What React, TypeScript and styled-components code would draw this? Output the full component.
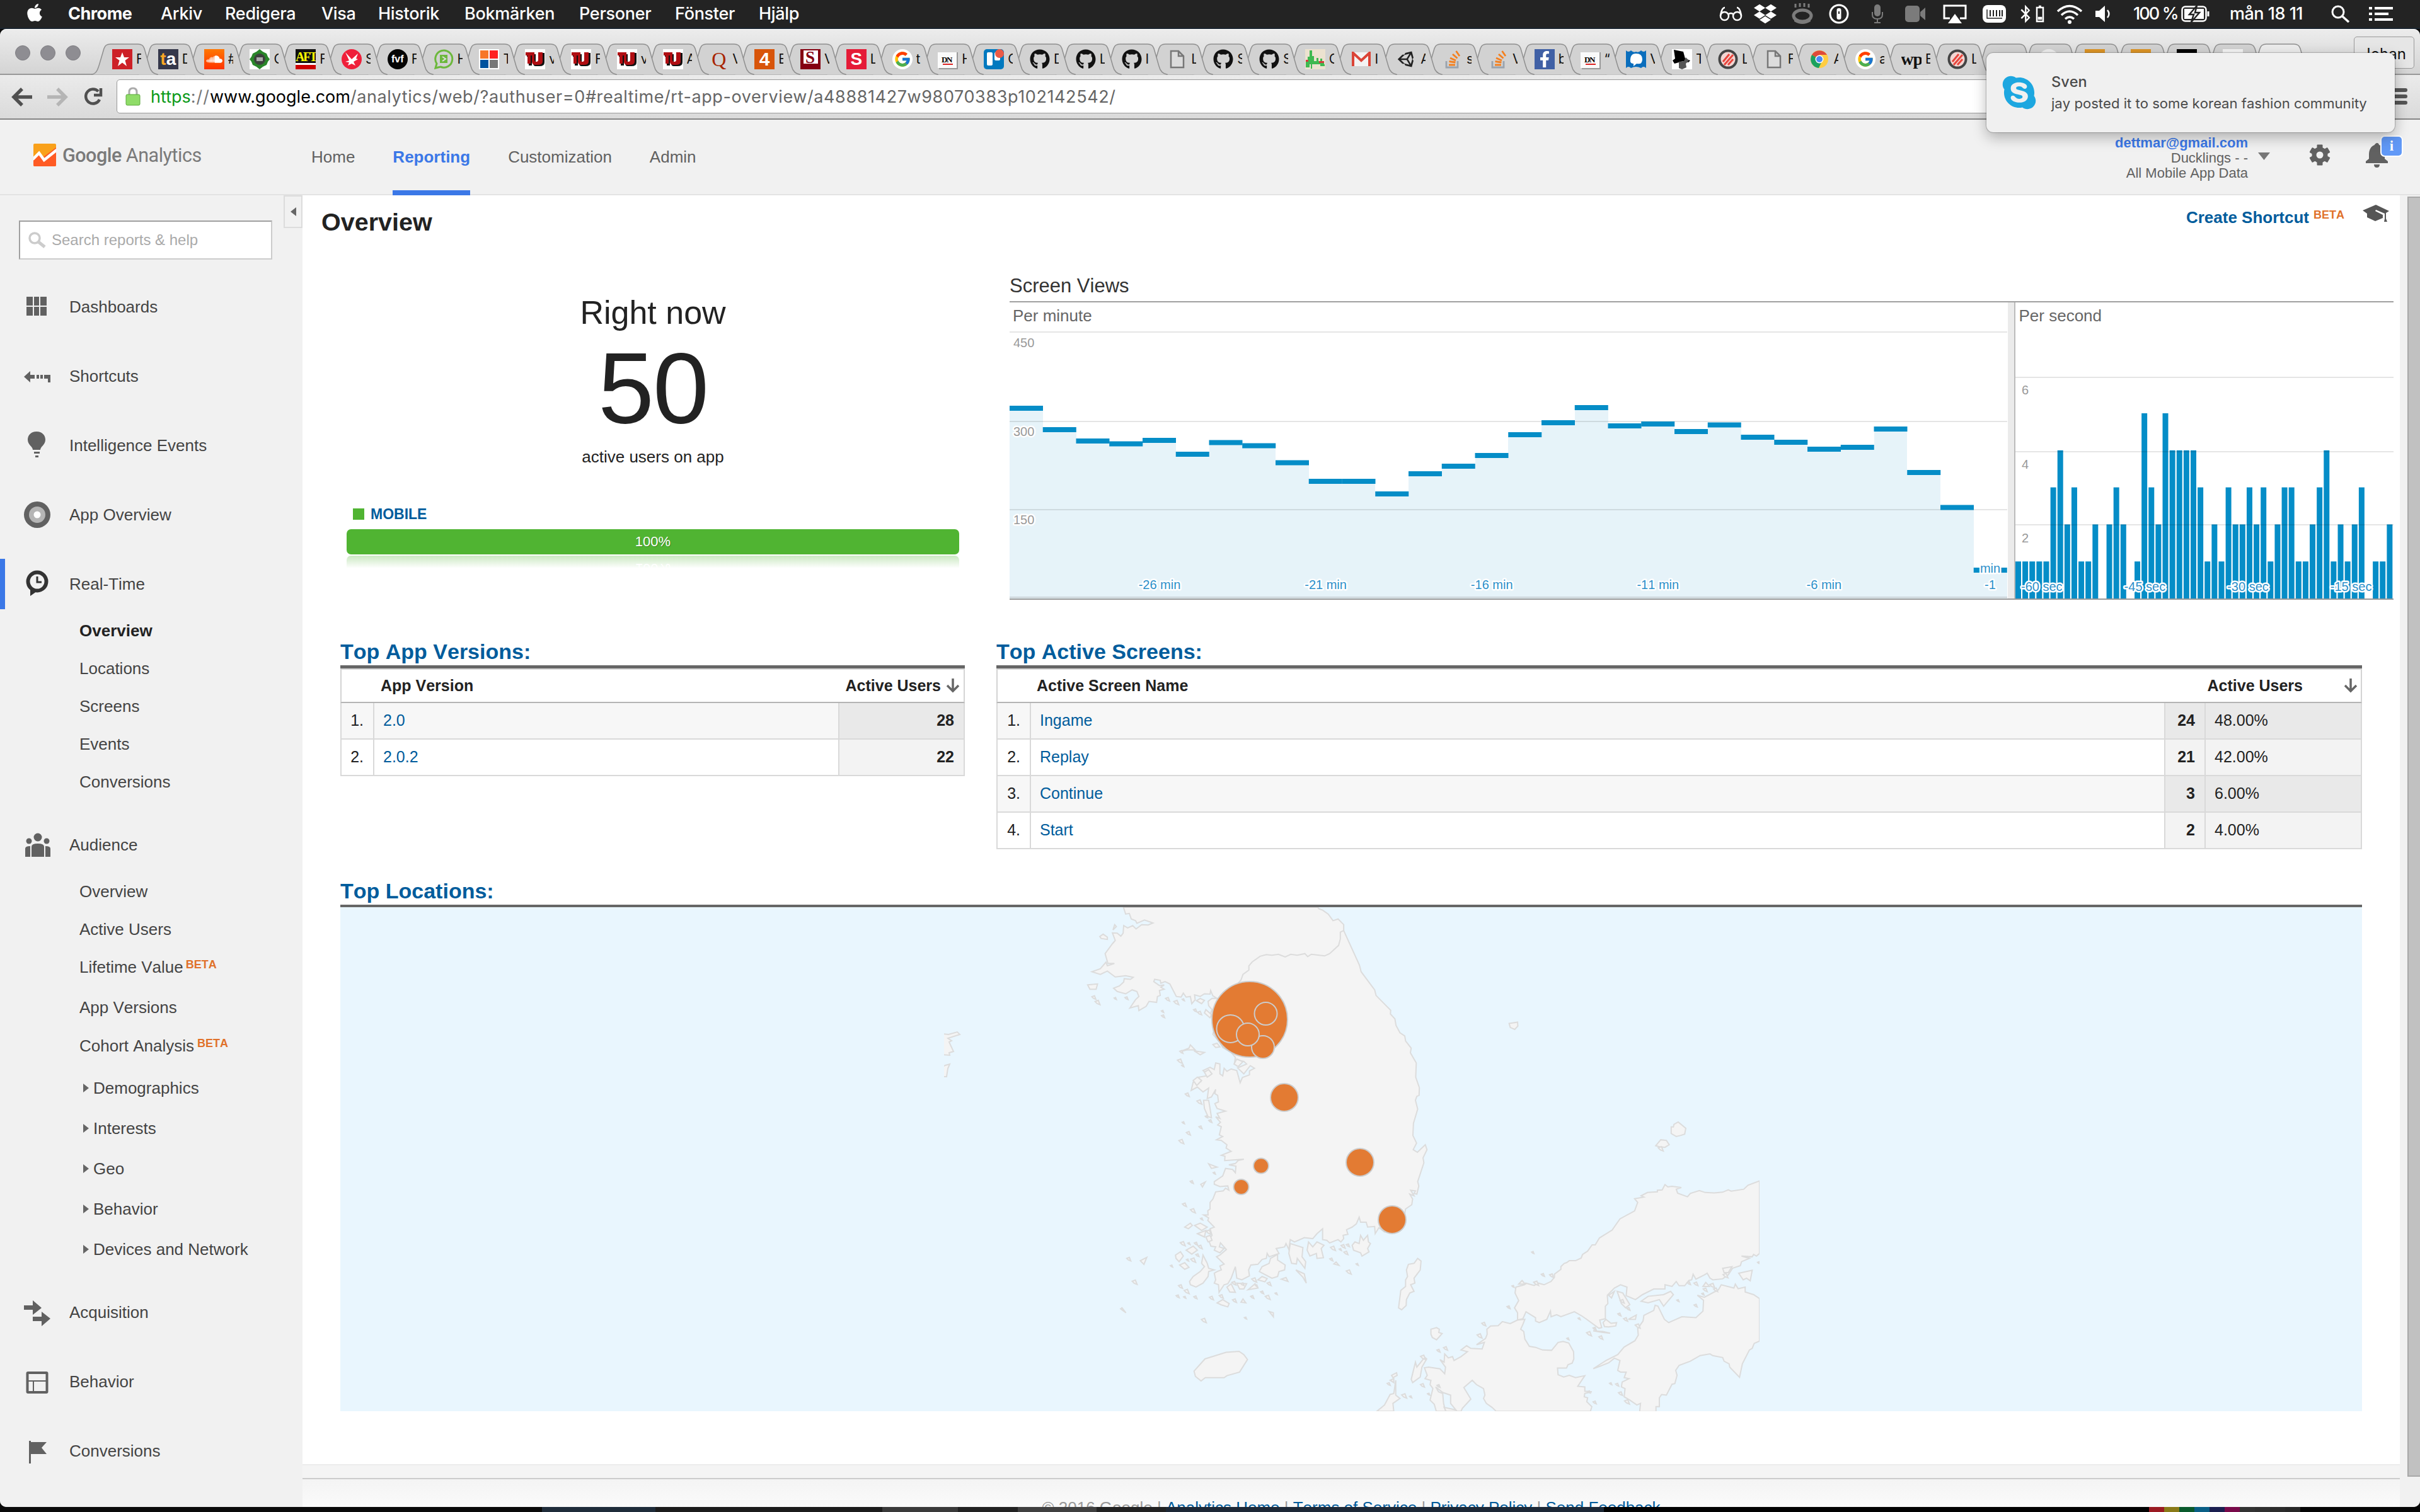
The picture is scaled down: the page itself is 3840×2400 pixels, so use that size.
import React from "react";
import styled, { createGlobalStyle } from "styled-components";
import { FaApple, FaBluetoothB, FaDropbox, FaFacebookF, FaGithub, FaSkype, FaSoundcloud, FaStackOverflow, FaUnity } from "react-icons/fa";
import { FcGoogle } from "react-icons/fc";

const Global = createGlobalStyle`
  * { box-sizing: border-box; }
  html, body { margin: 0; background: #0a0a0a; }
  body { width: 3840px; height: 2400px; overflow: hidden; font-family: "Liberation Sans", Arial, sans-serif; font-kerning: none; }
`;

const system = `Inter, Roboto, sans-serif`;

const Screen = styled.div`
  width: 3840px;
  height: 2400px;
  display: flex;
  flex-direction: column;
  overflow: hidden;
  background: #0a0a0a;
`;

/* ---------- macOS menu bar ---------- */

const MenuBar = styled.div`
  height: 46px;
  flex: none;
  display: flex;
  justify-content: space-between;
  background: #232323;
  border-bottom: 2px solid #1b2530;
  color: #fff;
  font-family: ${system};
  font-kerning: auto;
  font-size: 27px;
  line-height: 44px;
  white-space: nowrap;
`;
const MenuLeft = styled.div`
  display: flex;
  padding-left: 39px;
`;
const AppleSlot = styled.div`
  width: 69px;
  svg { margin-top: 4px; display: block; }
`;
const MenuItem = styled.div<{ $w: number; $bold?: boolean }>`
  width: ${(p) => p.$w}px;
  font-weight: ${(p) => (p.$bold ? 700 : 500)};
  letter-spacing: ${(p) => (p.$bold ? "-0.5px" : "-0.3px")};
`;
const MenuRight = styled.div`
  display: flex;
  align-items: center;
  padding-right: 43px;
`;
const Slot = styled.div<{ $w: number; $ml: number; $dim?: boolean }>`
  width: ${(p) => p.$w}px;
  margin-left: ${(p) => p.$ml}px;
  opacity: ${(p) => (p.$dim ? 0.4 : 1)};
  display: flex;
  svg { display: block; width: 100%; flex: none; }
`;
const Battery = styled.div`
  width: 75px;
  padding-left: 33px;
  font-weight: 500;
  letter-spacing: -1.9px;
`;
const Clock = styled.div`
  width: 193px;
  padding-left: 32px;
  font-weight: 500;
  letter-spacing: -0.5px;
`;

/* ---------- Browser chrome ---------- */

const Browser = styled.div`
  height: 2346px;
  flex: none;
  display: flex;
  flex-direction: column;
  border-radius: 10px;
  overflow: hidden;
  background: #f1f1f1;
`;
const TabBar = styled.div`
  height: 73px;
  flex: none;
  display: flex;
  background: linear-gradient(#ececec, #d4d4d4);
  border-bottom: 2px solid #999;
  border-top: 1px solid #fff;
`;
const Lights = styled.div`
  display: flex;
  gap: 16px;
  padding: 25px 0 0 24px;
  width: 158px;
`;
const Light = styled.div`
  width: 24px;
  height: 24px;
  border-radius: 50%;
  background: #8e8d92;
  border: 1px solid #7f7e83;
`;
const TabItem = styled.div<{ $z: number }>`
  z-index: ${(p) => p.$z};
  width: 72.8px;
  flex: none;
  height: 49px;
  margin-top: 22px;
  display: grid;
  align-items: center;
  > * { grid-area: 1 / 1; }
`;
const TabShape = styled.svg`
  width: 106px;
  height: 50px;
  margin-left: -13px;
  display: block;
`;
const TabFace = styled.div`
  display: flex;
  align-items: center;
  padding-left: 20px;
  gap: 6px;
`;
const TabTitle = styled.div`
  width: 8px;
  overflow: hidden;
  white-space: nowrap;
  font: 21px/30px ${system};
  color: #111;
`;
const Fav = styled.div<{ $bg?: string; $fg?: string; $round?: boolean; $size?: number }>`
  width: 32px;
  height: 32px;
  flex: none;
  display: flex;
  align-items: center;
  justify-content: center;
  overflow: hidden;
  background: ${(p) => p.$bg ?? "transparent"};
  color: ${(p) => p.$fg ?? "#fff"};
  border-radius: ${(p) => (p.$round ? "50%" : "0")};
  font: 700 ${(p) => p.$size ?? 26}px/32px "Liberation Sans", sans-serif;
  svg { display: block; }
`;
const Serif = styled.span<{ $size: number; $light?: boolean }>`
  font-family: "Liberation Serif", serif;
  font-weight: ${(p) => (p.$light ? 400 : 700)};
  font-size: ${(p) => p.$size}px;
  letter-spacing: -1px;
`;
const Profile = styled.div`
  margin-left: auto;
  margin-right: 9px;
  margin-top: 11px;
  width: 96px;
  height: 51px;
  border: 1.5px solid #999;
  border-radius: 5px;
  background: #e6e6e6;
  font: 24px/54px ${system};
  text-align: center;
  color: #111;
`;
const Toolbar = styled.div`
  height: 71px;
  flex: none;
  display: flex;
  background: linear-gradient(#ebebeb, #dadada);
  border-bottom: 2px solid #858585;
`;
const NavButtons = styled.div`
  width: 185px;
  display: flex;
  align-items: center;
  svg { display: block; }
`;
const UrlField = styled.div`
  width: 3540px;
  height: 54px;
  margin-top: 7px;
  display: flex;
  align-items: center;
  border: 1.5px solid #999;
  border-radius: 5px;
  background: #fff;
  padding-left: 13px;
`;
const Url = styled.div`
  margin-left: 16px;
  padding-top: 2px;
  font: 27px/50px ${system};
  color: #666;
  white-space: nowrap;
`;
const UrlPart = styled.span<{ $c: string; $ls?: number }>`
  color: ${(p) => p.$c};
  letter-spacing: ${(p) => p.$ls ?? 0}px;
`;
const Burger = styled.div`
  margin: 21px 0 0 auto;
  width: 44px;
  display: flex;
  flex-direction: column;
  gap: 4px;
  padding-right: 20px;
`;
const BurgerLine = styled.div`
  height: 6px;
  border-radius: 3px;
  background: #555;
`;

/* ---------- Notification ---------- */

const Notification = styled.div`
  position: absolute;
  z-index: 100;
  left: 3152px;
  top: 84px;
  width: 648px;
  height: 126px;
  display: flex;
  align-items: center;
  gap: 21px;
  padding-left: 22px;
  border-radius: 11px;
  background: #f0f0f0;
  box-shadow: 0 0 1px 1px rgba(0, 0, 0, 0.2), 0 8px 22px rgba(0, 0, 0, 0.28);
  font-family: ${system};
  color: #4a4a4a;
  svg { display: block; flex: none; }
`;
const NoteName = styled.div`
  font-size: 23.5px;
  font-weight: 500;
  line-height: 34px;
`;
const NoteText = styled.div`
  font-size: 22.1px;
  line-height: 34px;
  white-space: nowrap;
`;

/* ---------- Analytics header ---------- */

const Header = styled.div`
  height: 120px;
  flex: none;
  display: flex;
  border-bottom: 2px solid #e3e3e3;
  color: #616161;
`;
const Logo = styled.div`
  width: 494px;
  padding: 38px 0 0 53px;
  display: flex;
  svg { display: block; flex: none; }
`;
const LogoText = styled.div`
  margin-left: 10px;
  font: 400 30.5px/38px Roboto, sans-serif;
  letter-spacing: -0.5px;
  color: #7a7a7a;
  white-space: nowrap;
`;
const LogoBold = styled.span`
  font-weight: 500;
`;
const TopNav = styled.div`
  display: flex;
  gap: 60px;
`;
const TopLink = styled.div<{ $on?: boolean }>`
  height: 120px;
  font-size: 26px;
  line-height: 118px;
  font-weight: ${(p) => (p.$on ? 700 : 400)};
  color: ${(p) => (p.$on ? "#3b78e7" : "#616161")};
  border-bottom: 8px solid ${(p) => (p.$on ? "#3b78e7" : "transparent")};
`;
const Account = styled.div`
  margin-left: auto;
  padding-top: 25px;
  text-align: right;
  font-size: 22px;
  line-height: 24px;
`;
const Email = styled.div`
  font-weight: 700;
  color: #3b78e7;
`;
const HeaderIcons = styled.div`
  width: 273px;
  display: flex;
  padding: 25px 0 0 16px;
  svg { display: block; flex: none; }
`;
const BellWrap = styled.div`
  position: relative;
  margin-left: 53px;
`;
const Badge = styled.div`
  position: absolute;
  left: 24px;
  top: 0;
  width: 36px;
  height: 34px;
  border: 2px solid #fff;
  border-radius: 7px;
  background: #6199f7;
  color: #fff;
  text-align: center;
  font: 700 23px/29px "Liberation Serif", serif;
`;

/* ---------- Body ---------- */

const Body = styled.div`
  flex: 1;
  min-height: 0;
  display: flex;
`;
const Sidebar = styled.div`
  width: 480px;
  flex: none;
  display: flex;
  align-items: flex-start;
  background: #f1f1f1;
`;
const SideMain = styled.div`
  width: 450px;
`;
const Collapse = styled.div`
  width: 30px;
  height: 52px;
  border: 2px solid #dcdcdc;
  display: flex;
  align-items: center;
  justify-content: center;
`;
const Search = styled.div`
  margin: 40px 0 20px 30px;
  width: 402px;
  height: 62px;
  border: 2px solid #ccc;
  border-top-color: #a0a0a0;
  border-left-color: #a0a0a0;
  background: #fff;
  display: flex;
  align-items: center;
  padding-left: 13px;
  gap: 9px;
  font-size: 24px;
  color: #aaa;
`;
const NavItem = styled.div<{ $mt?: number }>`
  margin-top: ${(p) => p.$mt ?? 0}px;
  height: 110px;
  display: flex;
  align-items: center;
  font-size: 26px;
  color: #444;
`;
const NavMark = styled.div<{ $on?: boolean }>`
  width: 8px;
  height: 80px;
  background: ${(p) => (p.$on ? "#3b78e7" : "transparent")};
`;
const NavIcon = styled.div`
  width: 102px;
  padding-left: 30px;
  svg { display: block; }
`;
const SubList = styled.div`
  margin-top: -11px;
`;
const SubItem = styled.div<{ $h: number; $bold?: boolean; $beta?: boolean }>`
  height: ${(p) => p.$h}px;
  padding-left: 126px;
  display: flex;
  align-items: center;
  padding-bottom: ${(p) => (p.$beta ? 4 : 0)}px;
  font-size: 26px;
  white-space: nowrap;
  font-weight: ${(p) => (p.$bold ? 700 : 400)};
  color: ${(p) => (p.$bold ? "#222" : "#444")};
`;
const Caret = styled.div`
  margin: 0 7px 0 6px;
  border-left: 9px solid #666;
  border-top: 7px solid transparent;
  border-bottom: 7px solid transparent;
`;
const Beta = styled.span<{ $ml: number }>`
  margin-left: ${(p) => p.$ml}px;
  font-size: 18px;
  font-weight: 700;
  color: #e0712a;
  padding-bottom: 7px;
`;

const Column = styled.div`
  flex: 1;
  min-width: 0;
  display: flex;
  flex-direction: column;
`;
const Report = styled.div`
  height: 2016px;
  flex: none;
  background: #fff;
  border-bottom: 2px solid #ececec;
`;
const ReportTop = styled.div`
  height: 100px;
  display: flex;
  padding-left: 30px;
`;
const PageTitle = styled.div`
  font-size: 39.5px;
  font-weight: 700;
  line-height: 85px;
  color: #222;
`;
const Shortcut = styled.div`
  margin-left: auto;
  height: 70px;
  display: flex;
  align-items: center;
  font-size: 26px;
  font-weight: 700;
  color: #005c9c;
`;
const CapIcon = styled.div`
  width: 88px;
  padding: 15px 0 0 28px;
  svg { display: block; }
`;
const Summary = styled.div`
  height: 602px;
  display: flex;
`;
const NowCard = styled.div`
  margin-left: 60px;
  width: 992px;
  padding-top: 56px;
  text-align: center;
  color: #222;
`;
const NowTitle = styled.div`
  font-size: 52px;
  line-height: 60px;
`;
const NowCount = styled.div`
  margin-top: 9px;
  font-size: 160px;
  line-height: 162px;
  letter-spacing: -2px;
`;
const NowSub = styled.div`
  margin-top: 13px;
  font-size: 26px;
  line-height: 30px;
`;
const Legend = styled.div`
  margin: 62px 0 0 20px;
  height: 28px;
  display: flex;
  align-items: center;
  gap: 10px;
  font-size: 23px;
  font-weight: 700;
  color: #005c9c;
`;
const Swatch = styled.div`
  width: 18px;
  height: 18px;
  background: #50b432;
`;
const Meter = styled.div`
  margin: 10px 10px 0;
  height: 40px;
  border-radius: 7px;
  background: #50b432;
  color: #fff;
  font-size: 22px;
  line-height: 40px;
  text-shadow: 1px 1px 1px rgba(0, 0, 0, 0.25);
`;
const Mirror = styled.div`
  margin: 2px 10px 0;
  height: 20px;
  overflow: hidden;
  border-radius: 7px 7px 0 0;
  background: linear-gradient(rgba(80, 180, 50, 0.3), rgba(80, 180, 50, 0));
`;
const MirrorText = styled.div`
  transform: scaleY(-1);
  font-size: 22px;
  line-height: 40px;
  height: 40px;
  color: #fff;
`;
const ChartCard = styled.div`
  margin-left: 70px;
  width: 2196px;
  padding-top: 25px;
  svg { display: block; }
`;
const ChartTitle = styled.div`
  height: 43px;
  font-size: 31px;
  line-height: 38px;
  color: #333;
`;

const Tables = styled.div`
  height: 380px;
  display: flex;
  align-items: flex-start;
  padding-left: 60px;
  gap: 50px;
`;
const Panel = styled.div<{ $w: number }>`
  width: ${(p) => p.$w}px;
`;
const PanelTitle = styled.div`
  height: 44px;
  font-size: 34px;
  font-weight: 700;
  line-height: 44px;
  color: #005c9c;
`;
const Table = styled.div`
  border-top: 5px solid #666;
  font-size: 25px;
`;
const HeadRow = styled.div<{ $end: number }>`
  height: 55px;
  display: flex;
  align-items: center;
  justify-content: space-between;
  padding: 0 ${(p) => p.$end}px 0 62px;
  border: 2px solid #d4d4d4;
  border-bottom-color: #b4b4b4;
  font-weight: 700;
  color: #222;
`;
const HeadSort = styled.div<{ $gap: number }>`
  display: flex;
  align-items: center;
  gap: ${(p) => p.$gap}px;
`;
const Row = styled.div<{ $cols: string; $odd: boolean }>`
  height: 58px;
  display: grid;
  grid-template-columns: ${(p) => p.$cols};
  border-left: 2px solid #d9d9d9;
  background: ${(p) => (p.$odd ? "#f7f7f7" : "#fff")};
`;
const Cell = styled.div<{ $align?: string; $shade?: string; $link?: boolean; $bold?: boolean }>`
  border-right: 2px solid #d9d9d9;
  border-bottom: 2px solid #d9d9d9;
  padding: 0 15px 0 14px;
  line-height: 55px;
  text-align: ${(p) => p.$align ?? "left"};
  background: ${(p) => p.$shade ?? "transparent"};
  color: ${(p) => (p.$link ? "#005c9c" : "#222")};
  font-weight: ${(p) => (p.$bold ? 700 : 400)};
`;
const MapPanel = styled.div`
  margin-left: 60px;
  width: 3208px;
  svg { display: block; }
`;
const MapFrame = styled.div`
  border-top: 4px solid #666;
`;
const Footer = styled.div`
  flex: 1;
  background: #f4f4f4;
  padding-top: 20px;
`;
const FooterInner = styled.div`
  height: 46px;
  overflow: hidden;
  border-top: 2px solid #ccc;
  background: linear-gradient(#f4f4f4, #fafafa);
  text-align: center;
  font-size: 26px;
  line-height: 30px;
  padding-top: 30px;
  color: #999;
`;
const FooterLink = styled.span`
  color: #005c9c;
`;
const ScrollTrack = styled.div`
  width: 32px;
  flex: none;
  background: #f1f1f1;
  padding: 2px 0 0 12px;
`;
const ScrollThumb = styled.div`
  height: 2032px;
  background: #c1c1c1;
  border: 2px solid #a8a8a8;
  border-right: 0;
`;
const Dock = styled.div`
  flex: 1;
  display: flex;
  background: #050505;
`;
const DockPiece = styled.div<{ $w: number; $c: string }>`
  width: ${(p) => p.$w}px;
  background: ${(p) => p.$c};
`;

/* ---------- Favicons ---------- */

const Star = () => (
  <Fav $bg="#cd2027"><svg width="24" height="24" viewBox="0 0 24 24"><path fill="#fff" d="M12 1l3 8h8l-6.500 5 2.500 9-7-5.500L5 23l2.500-9L1 9h8z" /></svg></Fav>
);
const Ta = () => <Fav $bg="#35374a" $size={28}><UrlPart $c="#f9a825">t</UrlPart>a</Fav>;
const Cloud = () => <Fav $bg="linear-gradient(#f70,#f30)"><FaSoundcloud size={26} /></Fav>;
const Green = () => (
  <Fav $bg="#fff"><svg width="32" height="32" viewBox="0 0 32 32"><path d="M16 0l5 4 6 3 2 5 3 4-3 4-2 5-6 3-5 4-5-4-6-3-2-5-3-4 3-4 2-5 6-3z" fill="#2a862a" /><circle cx="16" cy="16" r="9" fill="#3d423d" /><path d="M11 13h10v6H11z" fill="#aaa" /></svg></Fav>
);
const Aft = () => (
  <Fav><svg width="32" height="32" viewBox="0 0 32 32"><path d="M0 0h32v22H0z" fill="#111" /><path d="M0 22h32v3H0z" fill="#fff" /><path d="M0 25h32v7H0z" fill="#c00" /><text x="0" y="19" fontFamily="Liberation Serif" fontWeight="700" fontSize="20" letterSpacing="-2.500" fill="#ff0">AFT</text></svg></Fav>
);
const Bird = () => (
  <Fav $bg="#ef1f3a" $round><svg width="26" height="26" viewBox="0 0 26 26"><path d="M3 2l10 11L23 4l-3 8 3 1-7 4 3 6-6-3-6 3 2-5-6-1 6-2z" fill="#fff" /></svg></Fav>
);
const Fvf = () => <Fav $bg="#050505" $round $size={16}>fvf</Fav>;
const Chat = () => (
  <Fav><svg width="32" height="32" viewBox="0 0 32 32"><path d="M3 30l2-7a13.500 13.500 0 1 1 6 5z" fill="none" stroke="#6cb83c" strokeWidth="3" /><path d="M10 9h12v13H10z" fill="#6cb83c" /><path d="M14 12l5 3.500-5 3.500" fill="none" stroke="#ddd" strokeWidth="2" /></svg></Fav>
);
const Squares = () => (
  <Fav $bg="#fff"><svg width="32" height="32" viewBox="0 0 32 32"><path d="M2 2h13v13H2z" fill="#f7762a" /><path d="M17 2h13v13H17z" fill="#f22" /><path d="M2 17h13v13H2z" fill="#00539f" /><path d="M17 17h13v13H17z" fill="#777" /></svg></Fav>
);
const Tu = () => (
  <Fav $bg="#fff"><svg width="32" height="32" viewBox="0 0 32 32"><path d="M3 8h14v12q0 3 3 3t3-3V6h8v15q0 6-8 6h-6q-4 0-4-5V12h-2v14H6V12H3z" fill="#111" /><path d="M1 5h14v12q0 3 3 3t3-3V5h7v15q0 5-8 5h-3q-6 0-6-5V10H9v13H4V10H1z" fill="#b00d12" /></svg></Fav>
);
const QFav = () => <Fav $fg="#a82400"><Serif $size={32} $light>Q</Serif></Fav>;
const Four = () => <Fav $bg="#d8550a" $size={30}>4</Fav>;
const DarkS = () => (
  <Fav $bg="#fff"><svg width="32" height="32" viewBox="0 0 32 32"><path d="M0 23h32v9H0zM0 0h5v23H0zM28 0h4v23h-4zM0 0h32v2H0z" fill="#850010" /><text x="8" y="22" fontFamily="Liberation Serif" fontWeight="700" fontSize="27" fill="#850010">S</text></svg></Fav>
);
const RedS = () => <Fav $bg="#e51b37" $size={28}>S</Fav>;
const G = () => <Fav $bg="#fff" $round><FcGoogle size={28} /></Fav>;
const Dn = () => (
  <Fav><svg width="32" height="32" viewBox="0 0 32 32"><path d="M0 5h32v27H2z" fill="#999" /><path d="M0 5h30v25H0z" fill="#fafafa" /><text x="6" y="21" fontFamily="Liberation Serif" fontWeight="700" fontSize="13" letterSpacing="-1.500">DN</text><path d="M8 23h16v2H8z" fill="#d22" /></svg></Fav>
);
const Trello = () => (
  <Fav><svg width="32" height="32" viewBox="0 0 32 32"><rect width="32" height="32" rx="5" fill="#0079bf" /><rect x="5" y="5" width="9" height="21" rx="2" fill="#fff" /><rect x="17" y="5" width="9" height="13" rx="2" fill="#fff" /><circle cx="25" cy="7" r="7" fill="#eb5a46" /></svg></Fav>
);
const Git = () => <Fav $fg="#111"><FaGithub size={32} /></Fav>;
const Doc = () => (
  <Fav><svg width="24" height="30" viewBox="0 0 24 30"><path d="M2 2h12l8 8v18H2zM14 2v8h8" fill="#dcdcdc" stroke="#777" strokeWidth="2.500" /></svg></Fav>
);
const Graph = () => (
  <Fav $bg="#ece2cf"><svg width="32" height="32" viewBox="0 0 32 32"><path d="M1 24V17h3v-5h3V2h4v9h3v8h4v-5h3v5h3v-4h3v6h3v3z" fill="#3fb950" /><path d="M1 24h6v5H1zM9 20h2v11H9zM24 24h7v3h-7z" fill="#3fb950" /><path d="M1 17h4v3H1zM22 19h8v3h-8z" fill="#d63b3b" /></svg></Fav>
);
const Gmail = () => (
  <Fav><svg width="30" height="24" viewBox="0 0 30 24"><path d="M2 1h26v22H2z" fill="#f3f3f3" /><path d="M2 23V2l13 12L28 2v21" fill="none" stroke="#db4437" strokeWidth="4" /></svg></Fav>
);
const Unity = () => <Fav $fg="#222"><FaUnity size={30} /></Fav>;
const Stack = () => (
  <Fav><svg width="26" height="30" viewBox="0 0 26 30"><path d="M3 18v10h18V18" fill="none" stroke="#9aa3ad" strokeWidth="2.800" /><path d="M7 24h10M7.500 18.500l10 1.500M9 13l9 4M13 7l7.500 6.500M18.500 2L24 10" stroke="#f4801f" strokeWidth="2.800" /></svg></Fav>
);
const Fb = () => <Fav><Fav $bg="#4060a5"><FaFacebookF size={26} /></Fav></Fav>;
const Wave = () => (
  <Fav><svg width="32" height="30" viewBox="0 0 32 30"><path d="M0 1q4 4 8 0 4 4 8 2 4 2 8-2 4 4 8 0v28q-4-4-8 0-8-4-16 0-4-4-8 0z" fill="#0a6ebd" /><path d="M7 19q-1-13 9-13 10 0 10 9 0 9-9 7l-5 4v-4q-4 0-5-3z" fill="#fff" /></svg></Fav>
);
const Rider = () => (
  <Fav $bg="#fff"><svg width="32" height="32" viewBox="0 0 32 32"><path d="M3 1l15 3 3 11 8 3-3 3-8-2-14 4-3-5 4-3z" fill="#000" /><path d="M11 20l8-1 3-6 5 5-5 5 1 6-7 3-5-2z" fill="#555" /></svg></Fav>
);
const Striped = () => (
  <Fav><svg width="32" height="32" viewBox="0 0 32 32"><circle cx="16" cy="16" r="13.500" fill="#f3d5d2" stroke="#444" strokeWidth="4" /><path d="M8 20l10-12M10 25l14-16M16 25l8-9" stroke="#e8453c" strokeWidth="3" /></svg></Fav>
);
const Chrome = () => (
  <Fav><svg width="30" height="30" viewBox="0 0 30 30"><circle cx="15" cy="15" r="14" fill="#ffcd42" /><path d="M15 15L3 8a14 14 0 0 1 24 0H15z" fill="#df4a3a" /><path d="M3 8a14 14 0 0 0 11 21l5-11-4-3z" fill="#1ba15f" /><circle cx="15" cy="15" r="6.500" fill="#fff" /><circle cx="15" cy="15" r="5" fill="#4a8af4" /></svg></Fav>
);
const Wp = () => <Fav $fg="#111"><Serif $size={28}>wp</Serif></Fav>;
const TFav = () => <Fav $fg="#111" $size={32}>t</Fav>;
const RedDot = () => <Fav $bg="#eee" $round><svg width="20" height="20" viewBox="0 0 20 20"><circle cx="10" cy="10" r="9" fill="#d33" /></svg></Fav>;
const Amber = () => <Fav $bg="#dd9425" $fg="#222" $size={24}>G</Fav>;
const Black = () => <Fav $bg="#000" />;
const Pale = () => <Fav $bg="#f4f4f4" $fg="#668" $size={22}>F</Fav>;
const Blank = () => <Fav />;

const tabs: [React.FC, string][] = [
  [Star, "F"], [Ta, "D"], [Cloud, "#"], [Green, "C"], [Aft, "F"], [Bird, "S"], [Fvf, "F"], [Chat, "H"], [Squares, "T"],
  [Tu, "v"], [Tu, "F"], [Tu, "v"], [Tu, "A"], [QFav, "V"], [Four, "E"], [DarkS, "V"], [RedS, "L"], [G, "t"], [Dn, "H"],
  [Trello, "C"], [Git, "D"], [Git, "L"], [Git, "I"], [Doc, "L"], [Git, "S"], [Git, "S"], [Graph, "C"], [Gmail, "I"],
  [Unity, "A"], [Stack, "s"], [Stack, "V"], [Fb, "b"], [Dn, "“"], [Wave, "V"], [Rider, "T"], [Striped, "L"], [Doc, "F"],
  [Chrome, "A"], [G, "a"], [Wp, "E"], [Striped, "L"], [TFav, ""], [RedDot, ""], [Amber, ""], [Amber, ""], [Black, ""],
  [Pale, ""], [Blank, ""],
];

/* ---------- Status icons ---------- */

const S = { fill: "none", stroke: "#fff", strokeWidth: 3 } as const;
const StatusIcons = () => (
  <>
    <Slot $w={37} $ml={0}><svg viewBox="0 0 37 24"><g {...S} strokeWidth={2.5}><circle cx="8.500" cy="15.500" r="6.500" /><circle cx="28.500" cy="15.500" r="6.500" /><path d="M14 13q4.500-4 9 0M2 15Q4 2 9 2M35 15Q33 2 28 2" /></g></svg></Slot>
    <Slot $w={36} $ml={18}><FaDropbox size={36} /></Slot>
    <Slot $w={38} $ml={23} $dim><svg viewBox="0 0 38 36"><ellipse cx="18" cy="21" rx="14" ry="9" {...S} strokeWidth={5} /><path d="M5 24q13 14 26 0v6q-13 8-26 0z" fill="#fff" /><path d="M7 8V2M14 7V1M21 7V1M28 8V2" {...S} /></svg></Slot>
    <Slot $w={32} $ml={22}><svg viewBox="0 0 32 32"><circle cx="16" cy="16" r="14" {...S} /><rect x="12.500" y="7" width="7" height="18" rx="3" fill="#fff" /><path d="M16 12v4" stroke="#222" strokeWidth="2" /></svg></Slot>
    <Slot $w={20} $ml={35} $dim><svg viewBox="0 0 20 32"><rect x="5" y="1" width="10" height="19" rx="5" fill="#fff" /><path d="M2 13v4q0 7 8 7t8-7v-4M10 24v6M5 30h10" {...S} strokeWidth={2} /></svg></Slot>
    <Slot $w={33} $ml={34} $dim><svg viewBox="0 0 33 26"><rect y="0" width="23" height="26" rx="5" fill="#fff" /><path d="M24 10L32 3v20l-8-7z" fill="#fff" /></svg></Slot>
    <Slot $w={38} $ml={27}><svg viewBox="0 0 38 30"><path d="M11 22H2V2h34v20h-9" {...S} /><path d="M19 15l11 15H8z" fill="#fff" /></svg></Slot>
    <Slot $w={37} $ml={25}><svg viewBox="0 0 37 29"><rect width="37" height="28" rx="8" fill="#fff" /><path d="M7 7v14h24" stroke="#222" strokeWidth="1.500" fill="none" /><path d="M12 8v10M17 8v10M22 8v10M27 8v10M31 8v10" stroke="#222" strokeWidth="2" /></svg></Slot>
    <Slot $w={18} $ml={22}><FaBluetoothB size={32} /></Slot>
    <Slot $w={14} $ml={7}><svg viewBox="0 0 14 28"><path d="M2 4h10v22H2zM5 2h4M5 20h4v2H5z" {...S} strokeWidth={2.5} /></svg></Slot>
    <Slot $w={42} $ml={19}><svg viewBox="0 0 42 31"><g {...S} strokeWidth={3.5}><path d="M2 11Q21-6 40 11M8 17q13-12 26 0M14 23q7-6 14 0" /></g><circle cx="21" cy="28" r="3" fill="#fff" /></svg></Slot>
    <Slot $w={27} $ml={20}><svg viewBox="0 0 27 26"><path d="M0 8h6l9-8v26l-9-8H0z" fill="#fff" /><path d="M19 7q5 6 0 12" {...S} strokeWidth={2.5} /></svg></Slot>
    <Battery>100 %</Battery>
    <Slot $w={45} $ml={34}><svg viewBox="0 0 45 26"><rect x="1.500" y="1.500" width="38" height="23" rx="5" {...S} strokeWidth={2.5} /><path d="M43 9v8" {...S} /><rect x="5" y="5" width="31" height="16" fill="#fff" /><path d="M25 0L13 14h7l-4 12L29 11h-7z" fill="#fff" stroke="#232323" strokeWidth="2.500" /></svg></Slot>
    <Clock>mån 18 11</Clock>
    <Slot $w={30} $ml={0}><svg viewBox="0 0 30 28"><circle cx="11" cy="11" r="9" {...S} /><path d="M18 18l10 9" {...S} strokeWidth={3.5} /></svg></Slot>
    <Slot $w={38} $ml={30}><svg viewBox="0 0 38 22"><path d="M0 2h5M9 2h29M0 11h5M9 11h22M0 20h5M9 20h29" {...S} strokeWidth={4} /></svg></Slot>
  </>
);

/* ---------- Sidebar icons ---------- */

const ic = "#616161";
const icons: Record<string, React.ReactNode> = {
  dash: <g fill={ic}><path d="M4 6h10v14H4zM16 6h8v14h-8zM26 6h10v14H26zM4 22h10v14H4zM16 22h8v14h-8zM26 22h10v14H26z" /></g>,
  short: <g fill={ic}><path d="M0 23L10 14v6h7v6h-7v6zM20 20h4v6h-4zM26 20h4v6h-4zM32 20h10v12h-4v-6h-6z" /></g>,
  bulb: <g fill={ic}><path d="M20 0c9 0 14 6 14 13 0 8-8 11-8 16H14c0-5-8-8-8-16C6 6 11 0 20 0zM16 32h9v3h-9zM18 38h5v3h-5z" /></g>,
  target: <><circle cx="21" cy="22" r="21" fill={ic} /><circle cx="21" cy="22" r="13" fill="#b5b5b5" /><circle cx="21" cy="22" r="5.500" fill="#fff" /></>,
  clock: <><circle cx="21" cy="18" r="14.500" fill="none" stroke="#333" strokeWidth="6" /><path d="M10 28v13l10-7z" fill="#333" /><path d="M21 10v9h7" fill="none" stroke="#333" strokeWidth="3" /></>,
  people: <g fill={ic}><circle cx="22" cy="10" r="6.500" /><circle cx="8" cy="16" r="4.500" /><circle cx="36" cy="16" r="4.500" /><path d="M12 41V25q0-5 10-5t10 5v16zM2 41V28q0-4 8-4v17zM42 41V28q0-4-8-4v17z" /></g>,
  acq: <g fill={ic}><path d="M0 11h14V3l14 12-14 11v-8H0zM14 29h14v-8l14 11-14 12v-8H14z" /></g>,
  behav: <g fill="none" stroke={ic}><rect x="5.500" y="8" width="31" height="31" rx="1" strokeWidth="4" /><path d="M6 21h30M15 21v17" strokeWidth="2" /></g>,
  flag: <g fill={ic}><path d="M8 6h3v36H8zM11 8h25l-8 9 8 10H11z" /></g>,
};
const Nav = ({ icon, label, on, mt }: { icon: string; label: string; on?: boolean; mt?: number }) => (
  <NavItem $mt={mt}>
    <NavMark $on={on} />
    <NavIcon><svg width="42" height="44" viewBox="0 0 42 44">{icons[icon]}</svg></NavIcon>
    {label}
  </NavItem>
);
const SortArrow = () => (
  <svg width="22" height="23" viewBox="0 0 22 23"><path d="M11 0v19M2 11l9 9 9-9" fill="none" stroke="#666" strokeWidth="3.500" /></svg>
);

/* ---------- Charts ---------- */

const minuteTops = [644, 678, 696, 700.5, 695, 717, 698.5, 703.5, 730.5, 760, 760, 780, 748, 736, 719, 686, 667, 643, 672, 669, 681, 670.5, 690, 698, 709, 706, 677, 746, 801.5, 901];
const secondValues = [1, 1, 1, 1, 1, 3, 4, 2, 3, 1, 1, 2, 0, 2, 3, 2, 0, 1, 5, 3, 2, 5, 4, 4, 4, 4, 3, 1, 2, 1, 3, 2, 2, 3, 2, 3, 1, 2, 3, 3, 1, 1, 2, 3, 4, 1, 2, 1, 2, 3, 0, 1, 1, 2];
const halo = { stroke: "#fff", strokeWidth: 5, paintOrder: "stroke", strokeLinejoin: "round" } as const;

const Charts = () => (
  <svg width="2196" height="474" viewBox="1602 478 2196 474" fontFamily="Liberation Sans">
    {minuteTops.map((y, i) => (
      <rect key={i} x={1602 + i * 52.75} y={y} width={52.75} height={950 - y} fill="#e6f3f9" shapeRendering="crispEdges" />
    ))}
    {[527, 669, 809].map((y) => <rect key={y} x="1602" y={y - 1} width="1583" height="2" fill="#000" fillOpacity="0.1" />)}
    {minuteTops.map((y, i) => (
      <rect key={i} x={1602 + i * 52.75} y={y} width={53} height={8} fill="#058dc7" />
    ))}
    <rect x="1602" y="947" width="1583" height="2" fill="#ccd4d8" />
    <rect x="3186" y="480" width="11" height="470" fill="#ebebeb" />
    <rect x="3196" y="480" width="2" height="470" fill="#bbb" />
    {secondValues.map((v, i) => (
      <rect key={i} x={3198 + i * 11.12} y={950 - v * 58.8} width={9} height={v * 58.8} fill="#058dc7" />
    ))}
    {[599, 717, 833].map((y) => <rect key={y} x="3198" y={y - 1} width="600" height="2" fill="#000" fillOpacity="0.1" />)}
    <rect x="1602" y="478" width="2196" height="2" fill="#a0a0a0" />
    <rect x="1602" y="950" width="2196" height="2" fill="#999" />
    <g fontSize="26" fill="#666">
      <text x="1607" y="510">Per minute</text>
      <text x="3203.500" y="510">Per second</text>
    </g>
    <g fontSize="20" fill="#999">
      <text x="1608" y="551" {...halo}>450</text>
      <text x="1608" y="691.500" {...halo}>300</text>
      <text x="1608" y="831.500" {...halo}>150</text>
      <text x="3208" y="626">6</text>
      <text x="3208" y="744">4</text>
      <text x="3208" y="861">2</text>
    </g>
    <g fontSize="20" fill="#2b8fca" textAnchor="middle">
      {["-26 min", "-21 min", "-16 min", "-11 min", "-6 min"].map((t, i) => (
        <text key={t} x={1840 + i * 263.6} y="935" {...halo}>{t}</text>
      ))}
      <text x="3158" y="909" {...halo}>min</text>
      <text x="3158" y="935" {...halo}>-1</text>
    </g>
    <g fontSize="20" fill="#2b8fca">
      {["-60 sec", "-45 sec", "-30 sec", "-15 sec"].map((t, i) => (
        <text key={t} x={3207 + i * 163.6} y="938" {...halo}>{t}</text>
      ))}
    </g>
  </svg>
);

/* ---------- Map ---------- */

const peninsula = "297,19 305,40 318,38 325,55 340,60 345,68 372,58 402,67 385,73 362,72 342,85 330,75 312,82 298,75 296,98 288,107 275,98 258,97 268,120 258,130 232,160 242,190 265,190 240,197 235,186 215,206 185,215 215,223 240,213 268,231 305,227 332,232 322,238 300,236 298,246 283,258 262,265 275,275 305,282 328,270 345,275 352,290 340,300 320,325 350,318 352,333 378,320 388,305 415,308 418,290 428,287 425,272 442,268 430,262 442,255 425,257 405,245 408,238 428,241 430,250 445,245 462,252 485,290 502,292 510,280 520,292 535,290 540,312 552,300 550,285 570,290 585,282 605,283 607,272 615,288 630,296 612,296 598,305 600,318 612,330 605,345 625,370 615,405 640,430 650,445 680,460 695,475 692,492 700,500 705,485 725,487 735,495 703,507 725,525 748,500 763,508 745,516 745,528 720,536 712,552 700,515 680,510 665,517 655,508 650,531 640,525 640,495 625,492 620,512 605,505 580,515 600,530 565,535 572,548 545,550 538,575 560,565 580,580 600,568 595,600 610,595 625,572 622,585 632,590 635,610 622,615 630,630 660,638 630,645 640,660 625,655 642,672 632,680 645,685 638,710 650,715 628,725 645,727 665,740 662,750 680,760 645,772 658,775 657,788 725,784 705,788 695,797 672,801 697,805 695,825 685,815 660,812 650,835 620,852 620,860 640,867 668,865 672,878 660,872 652,880 625,883 615,905 605,915 605,935 597,940 598,953 582,953 600,962 597,970 620,990 605,995 612,1015 600,1030 608,1048 625,1050 620,1060 640,1068 655,1055 638,1050 642,1038 663,1058 640,1075 628,1080 655,1102 640,1108 645,1120 630,1125 620,1130 625,1150 620,1160 635,1165 637,1188 655,1165 668,1162 680,1145 695,1110 700,1145 718,1150 745,1138 742,1120 750,1105 775,1103 790,1088 805,1085 808,1070 815,1080 850,1070 840,1055 870,1050 875,1040 885,1058 890,1028 905,1035 940,1022 970,1025 985,1010 1005,995 1005,1028 1020,1030 1030,1038 1060,1028 1070,1035 1080,1025 1078,1015 1095,1012 1090,998 1110,990 1125,980 1135,960 1140,975 1160,975 1165,990 1190,988 1192,1010 1205,992 1225,1005 1295,960 1300,935 1322,922 1325,905 1315,890 1330,895 1318,878 1335,880 1330,888 1340,890 1347,865 1343,852 1365,795 1362,780 1376,755 1370,740 1342,763 1327,755 1339,735 1326,712 1328,675 1343,632 1335,605 1340,593 1348,590 1349,567 1336,535 1338,492 1317,461 1320,447 1300,425 1297,410 1280,400 1266,378 1262,358 1246,343 1247,332 1195,287 1190,270 1142,215 1136,195 1080,90 1080,72 1060,55 1042,60 1025,40 1005,28 992,24 988,19";
const border = "1080,90 1068,95 1068,115 1062,135 1030,160 1012,167 965,162 952,169 942,160 915,165 892,162 872,170 848,162 825,165 805,163 783,168 755,185 743,197 743,210 722,223 715,240 705,250";
const koreanIslands = [
  "548,1427 587,1390 662,1370 708,1367 725,1377 738,1392 710,1430 665,1441 655,1447 588,1447 573,1457 553,1443",
  "1310,1103 1330,1100 1343,1085 1355,1093 1352,1120 1330,1145 1333,1160 1318,1165 1330,1185 1315,1190 1303,1210 1302,1228 1286,1241 1275,1235 1283,1182 1300,1170 1300,1150 1307,1140 1303,1120",
  "1390,1300 1410,1295 1420,1300 1418,1310 1430,1313 1410,1332 1395,1325 1390,1315",
  "532,1155 545,1140 570,1125 585,1110 575,1100 580,1075 595,1100 600,1115 620,1120 600,1125 598,1140 580,1160 555,1172 535,1165",
  "780,1125 790,1110 815,1100 820,1085 845,1073 845,1090 872,1105 870,1120 850,1125 845,1140 825,1145",
  "890,1040 935,1052 932,1080 945,1095 942,1115 915,1085 912,1102 895,1100 885,1070",
  "955,1035 970,1050 985,1035 1010,1045 1000,1055 1008,1083 985,1085 983,1070 960,1078 950,1060",
  "1110,1045 1120,1035 1135,1040 1140,1015 1150,1030 1165,1015 1168,1035 1175,1040 1165,1055 1170,1065 1145,1078 1140,1068 1115,1060",
  "582,605 600,605 605,630 610,658 598,655 585,630",
  "213,108 225,101 240,110 240,117 218,114", "170,255 205,252 200,268 178,268", "260,88 266,72 272,78",
  "482,1075 500,1065 510,1078 495,1095 484,1085", "497,1105 515,1098 530,1112 515,1118", "520,1060 545,1048 560,1060 540,1072",
  "515,990 535,978 542,985 528,995", "550,985 570,978 595,990 575,1000", "560,1010 590,1000 585,1020", "590,1020 605,1015 612,1030 598,1035",
  "630,1220 650,1210 673,1222 668,1232 645,1226", "775,1150 790,1140 808,1146 800,1156", "665,1172 680,1162 695,1188 675,1187",
  "700,1160 735,1162 725,1178 710,1178", "740,1180 765,1162 775,1175", "715,1218 722,1208 732,1220", "357,1092 380,1082 370,1103",
  "1045,1102 1053,1096 1063,1106", "858,1148 875,1143 882,1155", "910,1120 940,1132 947,1160 935,1142", "287,1238 292,1235 306,1250",
  "815,1246 830,1250 830,1262", "557,303 570,296 585,302 575,312", "590,330 610,345 605,355 585,340", "500,457 530,447 535,437 552,452 525,452",
  "548,455 585,460 570,467", "615,436 630,432 640,443 625,445", "545,545 560,535 575,545 558,560", "585,520 600,512 612,525 595,535",
  "572,860 588,853 578,868", "600,798 630,808 610,812", "1325,1462 1320,1452 1335,1400 1340,1415 1368,1385 1375,1390 1358,1415 1352,1445",
  "1198,1549 1225,1530 1245,1498 1258,1495 1265,1455 1265,1500 1280,1510 1255,1525 1258,1549", "1250,1440 1268,1432 1270,1440 1255,1447", "1245,1455 1258,1450 1258,1462",
  "690,495 700,480 722,488 705,503",
];
const specks: [number, number][] = [
  [268, 296], [308, 295], [192, 293], [205, 308], [436, 335], [438, 350], [454, 298], [485, 308], [510, 300], [552, 332], [568, 340], [498, 486], [508, 500], [503, 458],
  [524, 588], [567, 610], [510, 673], [571, 687], [528, 705], [503, 730], [620, 826], [540, 853], [514, 922], [544, 940], [592, 655], [606, 668], [316, 1087], [337, 1157],
  [468, 1108], [490, 1200], [500, 1170], [522, 1185], [515, 1203], [553, 1203], [610, 1205], [583, 1273], [731, 1266], [755, 1202], [692, 1213], [810, 1203], [840, 1192],
  [790, 1188], [815, 1162], [1042, 1054], [1068, 1058], [1036, 1088], [1088, 1068], [1098, 1126], [1128, 1103], [1095, 1045], [1078, 1048], [508, 1040], [530, 1040],
  [555, 1040], [570, 1050], [545, 1090], [525, 1090], [560, 1075], [645, 1200], [762, 1150], [770, 1168], [720, 1163], [690, 1160], [600, 1005], [575, 965], [1417, 1365],
  [1442, 1358], [1295, 1502], [1318, 1505], [1240, 1466], [1360, 1470],
];
const japan = [
  "1326,850 1285,863 1270,875 1225,881 1215,877 1195,884 1165,886 1133,885 1112,879 1080,888 1070,898 1035,887 1030,875 1048,870 1015,866 1000,868 990,861 980,877 963,878 963,883 928,885 905,895 915,899 882,904 893,915 882,941 830,965 802,999 757,1023 742,1044 731,1044 715,1063 697,1073 692,1084 672,1092 650,1092 640,1098 632,1100 620,1110 620,1118 597,1133 597,1142 585,1155 560,1165 540,1160 525,1167 495,1160 490,1165 460,1172 457,1190 470,1213 455,1235 466,1250 466,1272 485,1268 496,1247 530,1265 530,1275 543,1280 570,1270 583,1245 585,1262 605,1256 620,1262 668,1247 695,1260 712,1270 755,1297 765,1295 758,1272 778,1268 778,1230 787,1222 785,1197 810,1175 832,1165 855,1172 852,1198 885,1210 910,1195 950,1178 990,1178 990,1165 1015,1170 1030,1155 1040,1168 1060,1168 1075,1152 1085,1150 1090,1133 1100,1148 1130,1135 1140,1130 1150,1145 1160,1150 1195,1147 1215,1135 1230,1115 1258,1107 1262,1095 1290,1085 1262,1078 1300,1080 1305,1073 1315,1078 1326,1070",
  "1326,1207 1305,1195 1275,1187 1275,1172 1250,1177 1240,1163 1235,1175 1190,1165 1180,1180 1130,1203 1105,1197 1127,1212 1125,1245 1100,1265 1050,1262 1003,1280 988,1270 965,1230 955,1227 950,1243 915,1258 912,1275 893,1298 895,1318 883,1335 845,1354 822,1377 780,1395 735,1420 760,1412 790,1402 810,1388 830,1395 822,1425 832,1430 852,1430 845,1447 862,1450 838,1460 835,1475 848,1480 845,1505 865,1515 890,1530 903,1525 900,1550 958,1550 958,1535 970,1535 970,1508 978,1498 995,1500 1015,1467 1025,1465 1033,1440 1028,1425 1040,1410 1080,1397 1115,1380 1150,1375 1160,1380 1195,1386 1200,1397 1218,1405 1220,1415 1255,1446 1265,1405 1290,1363 1300,1358 1307,1343 1326,1336",
  "466,1272 440,1283 412,1277 397,1289 370,1290 357,1300 358,1315 352,1328 320,1347 348,1340 340,1360 300,1358 285,1350 265,1363 288,1368 265,1383 240,1395 235,1383 220,1387 207,1375 205,1400 190,1392 210,1415 207,1435 190,1420 150,1415 135,1417 145,1440 137,1450 158,1455 155,1468 165,1480 155,1515 170,1528 177,1549 210,1549 203,1525 200,1495 185,1490 175,1475 200,1492 228,1500 228,1525 247,1545 205,1537 212,1549 265,1549 270,1540 300,1512 275,1477 305,1455 320,1468 345,1480 350,1500 345,1510 355,1525 375,1537 390,1549 725,1549 730,1535 712,1520 715,1508 703,1505 705,1495 730,1490 705,1488 705,1475 680,1473 705,1441 672,1447 650,1440 630,1445 610,1438 608,1418 640,1418 645,1408 660,1403 666,1390 665,1368 648,1342 628,1337 610,1340 587,1364 555,1363 530,1355 508,1352 492,1330 488,1307 477,1300 485,1285 492,1270",
  "436,372 466,368 467,380 456,390 440,384", "1012,686 1020,686 1022,678 1037,671 1064,690 1060,708 1045,712 1030,715 1012,706",
  "957,743 975,725 995,727 1005,740 990,748 970,746", "770,1280 780,1270 798,1282 818,1280 815,1290 790,1293 775,1292",
  "1252,1130 1300,1121 1293,1153 1280,1145 1268,1150", "1195,1115 1228,1110 1215,1128 1200,1128", "820,1185 840,1190 865,1225 850,1235 835,1222",
  "905,1215 930,1200 985,1195 1010,1185 1020,1195 985,1230 970,1210 930,1220", "790,1197 810,1185 800,1205", "1125,1170 1135,1158 1148,1170",
  "470,1163 482,1152 493,1163", "735,1305 770,1310 795,1312 770,1307", "860,1270 888,1257 885,1270",
];
const japanSpecks: [number, number][] = [
  [520, 1067], [556, 1135], [587, 1137], [532, 1160], [450, 1170], [434, 1233], [346, 1284], [331, 1320], [645, 1329], [740, 1298], [762, 1325], [720, 1313], [685, 1268], [828, 1255],
  [850, 1270], [893, 1290], [1036, 1213], [1099, 1228], [1133, 1180], [1158, 1167], [1125, 1193], [1075, 1160], [1100, 1162], [975, 752], [797, 1465], [820, 1468], [832, 1495], [855, 1520],
  [720, 1490], [740, 1522], [1170, 1180], [1205, 1137], [1323, 1098], [860, 1238], [838, 1215], [130, 1385], [150, 1497], [185, 1472],
];
const bubbles: [number, number, number][] = [
  [1983, 1618, 60], [2008.5, 1609, 18], [2004, 1662, 18], [1952.5, 1633, 22], [1980, 1642, 18], [2038, 1742, 22], [2001, 1850.5, 12], [1969.5, 1884, 12], [2158, 1845, 22], [2209, 1936, 22],
];
const land = { fill: "#f4f4f4", stroke: "#dcdcdc", strokeWidth: 2, vectorEffect: "non-scaling-stroke" } as const;
const Speck = ({ x, y, i }: { x: number; y: number; i: number }) => {
  const r = 4 + (i % 4) * 1.6;
  return <polygon points={`${x - r},${y - r * 0.3} ${x + r * 0.3},${y - r * 0.7} ${x + r},${y + r * 0.8} ${x - r * 0.2},${y + r * 0.4}`} {...land} />;
};

const LocationMap = () => (
  <svg width="3208" height="800" viewBox="540 1440 3208 800">
    <defs><clipPath id="tiles"><rect x="1498" y="1440" width="1294" height="800" /></clipPath></defs>
    <rect x="540" y="1440" width="3208" height="800" fill="#e9f6fe" />
    <g clipPath="url(#tiles)">
      <g transform="translate(1650 1430) scale(0.446429 0.523)">
        <polygon points={peninsula} {...land} />
        <polyline points={border} {...land} fill="none" />
        {koreanIslands.map((p, i) => <polygon key={i} points={p} {...land} />)}
        {specks.map(([x, y], i) => <Speck key={i} x={x} y={y} i={i} />)}
      </g>
      <g transform="translate(2200 1430) scale(0.446429 0.523)">
        {japan.map((p, i) => <polygon key={i} points={p} {...land} />)}
        {japanSpecks.map(([x, y], i) => <Speck key={i} x={x} y={y} i={i} />)}
      </g>
      <polygon points="1494,1641 1505,1642 1519,1638 1523,1642 1504,1648 1510,1652 1506,1654 1513,1669 1506,1671 1507,1675 1494,1674" {...land} />
      <polygon points="1494,1694 1500,1691 1507,1689 1504,1696 1502,1709 1494,1709" {...land} />
    </g>
    {bubbles.map(([x, y, r], i) => <circle key={i} cx={x} cy={y} r={r} fill="#e37b33" stroke="#ccc" strokeWidth="2" />)}
  </svg>
);

/* ---------- Page ---------- */

const menus: [string, number][] = [["Chrome", 147], ["Arkiv", 102], ["Redigera", 153], ["Visa", 90], ["Historik", 137], ["Bokmärken", 182], ["Personer", 152], ["Fönster", 133], ["Hjälp", 80]];
const screens: [string, string, string][] = [["Ingame", "24", "48.00%"], ["Replay", "21", "42.00%"], ["Continue", "3", "6.00%"], ["Start", "2", "4.00%"]];
const versions: [string, string][] = [["2.0", "28"], ["2.0.2", "22"]];
const footerLinks = ["Analytics Home", "Terms of Service", "Privacy Policy", "Send Feedback"];

export default function App() {
  return (
    <Screen>
      <Global />
      <MenuBar>
        <MenuLeft>
          <AppleSlot><FaApple size={32} /></AppleSlot>
          {menus.map(([t, w], i) => <MenuItem key={t} $w={w} $bold={i === 0}>{t}</MenuItem>)}
        </MenuLeft>
        <MenuRight><StatusIcons /></MenuRight>
      </MenuBar>

      <Browser>
        <TabBar>
          <Lights><Light /><Light /><Light /></Lights>
          {tabs.map(([Icon, t], i) => (
            <TabItem key={i} $z={i === tabs.length - 1 ? 90 : 80 - i}>
              <TabShape viewBox="0 0 106 50">
                <path d="M0 49.500C8 48 10 42 13 32L20 8Q22 1 30 1H74Q82 1 84 8L92 36Q95 48 106 49.500" fill={i === tabs.length - 1 ? "#ececec" : "#d2d2d2"} stroke="#8f8f8f" strokeWidth="1.500" />
              </TabShape>
              <TabFace><Icon />{t && <TabTitle>{t}</TabTitle>}</TabFace>
            </TabItem>
          ))}
          <Profile>Johan</Profile>
        </TabBar>
        <Toolbar>
          <NavButtons>
            <svg width="185" height="34" viewBox="0 0 185 34">
              <path d="M22 17h29M35 4L22 17l13 13" fill="none" stroke="#505050" strokeWidth="5.500" />
              <path d="M75 17h28M91 4l13 13-13 13" fill="none" stroke="#b5b5b5" strokeWidth="5.500" />
              <path d="M156 8a11.500 11.500 0 1 0 2 13M160 3v11h-11" fill="none" stroke="#505050" strokeWidth="4.500" />
            </svg>
          </NavButtons>
          <UrlField>
            <svg width="24" height="30" viewBox="0 0 24 30"><path d="M6 14V8q0-6 6-6t6 6v6" fill="none" stroke="#aaa" strokeWidth="3" /><rect x="1" y="12" width="22" height="17" rx="2" fill="#8fdc68" stroke="#5ba83a" /></svg>
            <Url>
              <UrlPart $c="#0b9a18">https</UrlPart><UrlPart $c="#777" $ls={1}>://</UrlPart><UrlPart $c="#000">www.google.com</UrlPart>
              <UrlPart $c="#666" $ls={0.6}>/analytics/web/?authuser=0#realtime/rt-app-overview/a48881427w98070383p102142542/</UrlPart>
            </Url>
          </UrlField>
          <Burger><BurgerLine /><BurgerLine /><BurgerLine /></Burger>
        </Toolbar>

        <Header>
          <Logo>
            <svg width="36" height="36" viewBox="0 0 36 36"><rect width="36" height="36" rx="2" fill="#f9a11b" /><path d="M0 24L9 15l7 6L36 6v28q0 2-2 2H2q-2 0-2-2z" fill="#ff5b24" /><path d="M-1 25L9 15l8 11L37 10" fill="none" stroke="#fff" strokeWidth="4.500" /></svg>
            <LogoText><LogoBold>Google</LogoBold> Analytics</LogoText>
          </Logo>
          <TopNav>
            <TopLink>Home</TopLink>
            <TopLink $on>Reporting</TopLink>
            <TopLink>Customization</TopLink>
            <TopLink>Admin</TopLink>
          </TopNav>
          <Account>
            <Email>dettmar@gmail.com</Email>
            <div>Ducklings - -</div>
            <div>All Mobile App Data</div>
          </Account>
          <HeaderIcons>
            <svg width="19" height="50" viewBox="0 0 19 50"><path d="M0 27h19l-9.500 12z" fill="#777" /></svg>
            <svg width="98" height="60" viewBox="0 0 98 60"><g transform="translate(79 31)"><circle r="9" fill="none" stroke={ic} strokeWidth="7" />{[0, 60, 120, 180, 240, 300].map((a) => <rect key={a} x="-4.500" y="-16.500" width="9" height="7" rx="1" fill={ic} transform={`rotate(${a})`} />)}</g></svg>
            <BellWrap>
              <svg width="38" height="54" viewBox="0 0 38 54"><path d="M19 12c2 0 3 2 3 3 7 2 9 8 9 15v7l5 4v3H1v-3l5-4v-7c0-7 3-13 9-15 0-1 2-3 4-3zM14 46h9q0 5-4.500 5T14 46z" fill={ic} /></svg>
              <Badge>i</Badge>
            </BellWrap>
          </HeaderIcons>
        </Header>

        <Body>
          <Sidebar>
            <SideMain>
              <Search>
                <svg width="28" height="26" viewBox="0 0 28 26"><circle cx="10" cy="10" r="8" fill="none" stroke="#ccc" strokeWidth="3.500" /><path d="M16 16l10 8" stroke="#ccc" strokeWidth="5" /></svg>
                Search reports &amp; help
              </Search>
              <Nav icon="dash" label="Dashboards" />
              <Nav icon="short" label="Shortcuts" />
              <Nav icon="bulb" label="Intelligence Events" />
              <Nav icon="target" label="App Overview" />
              <Nav icon="clock" label="Real-Time" on />
              <SubList>
                <SubItem $h={60} $bold>Overview</SubItem>
                {["Locations", "Screens", "Events", "Conversions"].map((t) => <SubItem key={t} $h={60}>{t}</SubItem>)}
              </SubList>
              <Nav icon="people" label="Audience" mt={15} />
              <SubList>
                <SubItem $h={60}>Overview</SubItem>
                <SubItem $h={60}>Active Users</SubItem>
                <SubItem $h={64} $beta>Lifetime Value<Beta $ml={4}>BETA</Beta></SubItem>
                <SubItem $h={60}>App Versions</SubItem>
                <SubItem $h={66} $beta>Cohort Analysis<Beta $ml={5}>BETA</Beta></SubItem>
                {["Demographics", "Interests", "Geo", "Behavior", "Devices and Network"].map((t) => <SubItem key={t} $h={64}><Caret />{t}</SubItem>)}
              </SubList>
              <Nav icon="acq" label="Acquisition" mt={13} />
              <Nav icon="behav" label="Behavior" />
              <Nav icon="flag" label="Conversions" />
            </SideMain>
            <Collapse><svg width="9" height="14" viewBox="0 0 9 14"><path d="M9 0v14L0 7z" fill="#666" /></svg></Collapse>
          </Sidebar>

          <Column>
            <Report>
              <ReportTop>
                <PageTitle>Overview</PageTitle>
                <Shortcut>Create Shortcut<Beta $ml={7}>BETA</Beta></Shortcut>
                <CapIcon>
                  <svg width="44" height="30" viewBox="0 0 44 30"><path d="M1 9L22 0l21 10-5 3v9l2 5h-5l1-5v-8L22 8l-1 2 12 6v5L21 26 8 20v-6z" fill="#555" /></svg>
                </CapIcon>
              </ReportTop>
              <Summary>
                <NowCard>
                  <NowTitle>Right now</NowTitle>
                  <NowCount>50</NowCount>
                  <NowSub>active users on app</NowSub>
                  <Legend><Swatch />MOBILE</Legend>
                  <Meter>100%</Meter>
                  <Mirror><MirrorText>100%</MirrorText></Mirror>
                </NowCard>
                <ChartCard>
                  <ChartTitle>Screen Views</ChartTitle>
                  <Charts />
                </ChartCard>
              </Summary>
              <Tables>
                <Panel $w={991}>
                  <PanelTitle>Top App Versions:</PanelTitle>
                  <Table>
                    <HeadRow $end={6}><span>App Version</span><HeadSort $gap={8}>Active Users<SortArrow /></HeadSort></HeadRow>
                    {versions.map(([v, n], i) => (
                      <Row key={v} $cols="52px 1fr 199px" $odd={i % 2 === 0}>
                        <Cell $align="right">{i + 1}.</Cell>
                        <Cell $link>{v}</Cell>
                        <Cell $align="right" $bold $shade={i % 2 ? "#f3f3f3" : "#e9e9e9"}>{n}</Cell>
                      </Row>
                    ))}
                  </Table>
                </Panel>
                <Panel $w={2167}>
                  <PanelTitle>Top Active Screens:</PanelTitle>
                  <Table>
                    <HeadRow $end={5}><span>Active Screen Name</span><HeadSort $gap={65}>Active Users<SortArrow /></HeadSort></HeadRow>
                    {screens.map(([s, n, p], i) => {
                      const shade = i % 2 ? "#f3f3f3" : "#e9e9e9";
                      return (
                        <Row key={s} $cols="53px 1fr 64px 248px" $odd={i % 2 === 0}>
                          <Cell $align="right">{i + 1}.</Cell>
                          <Cell $link>{s}</Cell>
                          <Cell $align="right" $bold $shade={shade}>{n}</Cell>
                          <Cell $shade={shade}>{p}</Cell>
                        </Row>
                      );
                    })}
                  </Table>
                </Panel>
              </Tables>
              <MapPanel>
                <PanelTitle>Top Locations:</PanelTitle>
                <MapFrame><LocationMap /></MapFrame>
              </MapPanel>
            </Report>
            <Footer>
              <FooterInner>
                © 2016 Google{footerLinks.map((t) => <React.Fragment key={t}> | <FooterLink>{t}</FooterLink></React.Fragment>)}
              </FooterInner>
            </Footer>
          </Column>
          <ScrollTrack><ScrollThumb /></ScrollTrack>
        </Body>
      </Browser>

      <Dock>
        <DockPiece $w={860} $c="#0a0a0a" />
        <DockPiece $w={180} $c="#1f2c3a" />
        <DockPiece $w={360} $c="#1c1c1c" />
        <DockPiece $w={120} $c="#3a3a3a" />
        <DockPiece $w={95} $c="#222" />
        <DockPiece $w={125} $c="#404040" />
        <DockPiece $w={110} $c="#222" />
        <DockPiece $w={695} $c="#1d2836" />
        <DockPiece $w={865} $c="#020202" />
        {["#9a1a22", "#8a7a18", "#0a5a2c", "#0a5f86", "#1a1f50", "#780a4a", "#333", "#303030", "#2c2c2c", "#282828"].map((c) => <DockPiece key={c} $w={24} $c={c} />)}
      </Dock>

      <Notification>
        <FaSkype size={60} color="#1da7e0" />
        <div>
          <NoteName>Sven</NoteName>
          <NoteText>jay posted it to some korean fashion community</NoteText>
        </div>
      </Notification>
    </Screen>
  );
}
